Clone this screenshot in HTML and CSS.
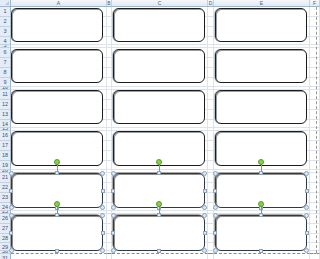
FILE: index.html
```html
<!DOCTYPE html>
<html lang="en">
<head>
  <meta charset="UTF-8" />
  <title>Book1 - Sheet1</title>
  <link rel="stylesheet" href="styles.css">
</head>
<body>

  <div class="sheet">
    <div class="row head">
      <div class="corner"><span class="tri"></span></div>
      <div class="col">A</div>
      <div class="col">B</div>
      <div class="col">C</div>
      <div class="col">D</div>
      <div class="col">E</div>
      <div class="col">F</div>
    </div>

    <div id="rows"></div>

    <!-- Shapes floating over the cells -->
    <div class="shapes">
      <div class="box"></div><div class="box"></div><div class="box"></div>
      <div class="box"></div><div class="box"></div><div class="box"></div>
      <div class="box"></div><div class="box"></div><div class="box"></div>
      <div class="box"></div><div class="box"></div><div class="box"></div>
      <div class="box sel"></div><div class="box sel"></div><div class="box sel"></div>
      <div class="box sel"></div><div class="box sel"></div><div class="box sel"></div>
    </div>

    <div class="break-v"></div>
  </div>

  <script>
    // row heights in px, 30 rows plus the one peeking at the bottom
    const heights = [
      10, 10, 10, 8, 3,
      10, 10, 10, 9, 3,
      10, 10, 10, 8, 3,
      10, 10, 10, 9, 3,
      10, 10, 10, 8, 3,
      10, 10, 9, 8, 3,
      10
    ];
    const rows = document.getElementById("rows");

    heights.forEach((h, i) => {
      const row = document.createElement("div");
      row.className = "row h" + h + (i === 29 ? " break" : "");
      let html = '<div class="num">' + (i + 1) + "</div>";
      for (let c = 0; c < 6; c++) html += '<div class="cell"></div>';
      row.innerHTML = html;
      rows.appendChild(row);
    });

    // selection handles on the selected shapes
    const handles = ["tl", "tc", "tr", "ml", "mr", "bl", "bc", "br"];
    document.querySelectorAll(".box.sel").forEach(box => {
      let html = '<span class="stem"></span><span class="rot"></span>';
      handles.forEach(h => {
        const shape = (h[0] === "t" || h[0] === "b") && h[1] !== "c" ? "dot" : "sq";
        html += '<span class="handle ' + shape + " " + h + '"></span>';
      });
      box.innerHTML = html;
    });
  </script>

</body>
</html>
```

FILE: styles.css
```css
* {
  box-sizing: border-box;
}

body {
  margin: 0;
  background: #fff;
  font-family: "Liberation Sans", Arial, sans-serif;
  overflow: hidden;
}

.sheet {
  position: relative;
  width: 320px;
  height: 259px;
  overflow: hidden;
}

.row {
  display: grid;
  grid-template-columns: 11px 96px 5px 96px 6px 96px 1fr;
  overflow: hidden;
}

.row.h10 { height: 10px; }
.row.h9 { height: 9px; }
.row.h8 { height: 8px; }
.row.h3 { height: 3px; }

/* Column header */
.head {
  height: 7px;
  background: linear-gradient(#f4f7fb, #e3e9f2);
  border-bottom: 1px solid #9eb6ce;
}

.head .col {
  border-right: 1px solid #c5d1de;
  color: #4c607a;
  font-size: 5px;
  line-height: 6px;
  text-align: center;
}

.corner {
  position: relative;
  background: #e4ecf7;
  border-right: 1px solid #9eb6ce;
}

.corner .tri {
  position: absolute;
  right: 1px;
  bottom: 1px;
  width: 0;
  height: 0;
  border-left: 4px solid transparent;
  border-bottom: 4px solid #b9c7d8;
}

/* Row header */
.num {
  background: #e4ecf7;
  border-right: 1px solid #9eb6ce;
  border-bottom: 1px solid #c5d1de;
  color: #3d5271;
  font-size: 5.5px;
  line-height: 9px;
  text-align: center;
  overflow: hidden;
}

.h3 .num {
  line-height: 1px;
}

.cell {
  border-right: 1px solid #dde3ec;
  border-bottom: 1px solid #dde3ec;
}

/* Page break markers */
.row.break .cell {
  border-bottom: 1px dashed #8a8a8a;
}

.break-v {
  position: absolute;
  top: 7px;
  left: 316px;
  height: 246px;
  border-left: 1px dashed #9a9a9a;
}

/* Rounded rectangles */
.shapes {
  position: absolute;
  top: 8px;
  left: 11px;
  display: grid;
  grid-template-columns: 92px 92px 92px;
  grid-template-rows: 34px 34px 34px 35px 35px 36px;
  column-gap: 10px;
  row-gap: 7px;
}

.box {
  position: relative;
  background: #fff;
  border: 1px solid #1c1c1c;
  border-radius: 6px;
  box-shadow: inset 1px 1px 0 #9c9c9c, -1px 0 0 #b8c2cf;
}

.box.sel {
  border-color: #2e3a48;
  box-shadow: inset 1px 1px 0 #8c8c8c, -1px -1px 0 #a8a8a8;
}

.handle {
  position: absolute;
  width: 5px;
  height: 5px;
  background: #dbe8f6;
  border: 1px solid #8ba3bd;
  z-index: 2;
}

.handle.dot {
  border-radius: 50%;
}

.handle.sq {
  width: 4px;
  height: 4px;
}

.handle.tl { top: -3px; left: -3px; }
.handle.tr { top: -3px; right: -3px; }
.handle.bl { bottom: -3px; left: -3px; }
.handle.br { bottom: -3px; right: -3px; }
.handle.tc { top: -3px; left: calc(50% - 2px); }
.handle.bc { bottom: -3px; left: calc(50% - 2px); }
.handle.ml { top: calc(50% - 2px); left: -3px; }
.handle.mr { top: calc(50% - 2px); right: -3px; }

.rot {
  position: absolute;
  top: -15px;
  left: calc(50% - 3px);
  width: 6px;
  height: 6px;
  border-radius: 50%;
  background: #86d046;
  border: 1px solid #5a9a2a;
  z-index: 3;
}

.stem {
  position: absolute;
  top: -10px;
  left: 50%;
  height: 9px;
  border-left: 1px solid #7f93a8;
  z-index: 2;
}
```
